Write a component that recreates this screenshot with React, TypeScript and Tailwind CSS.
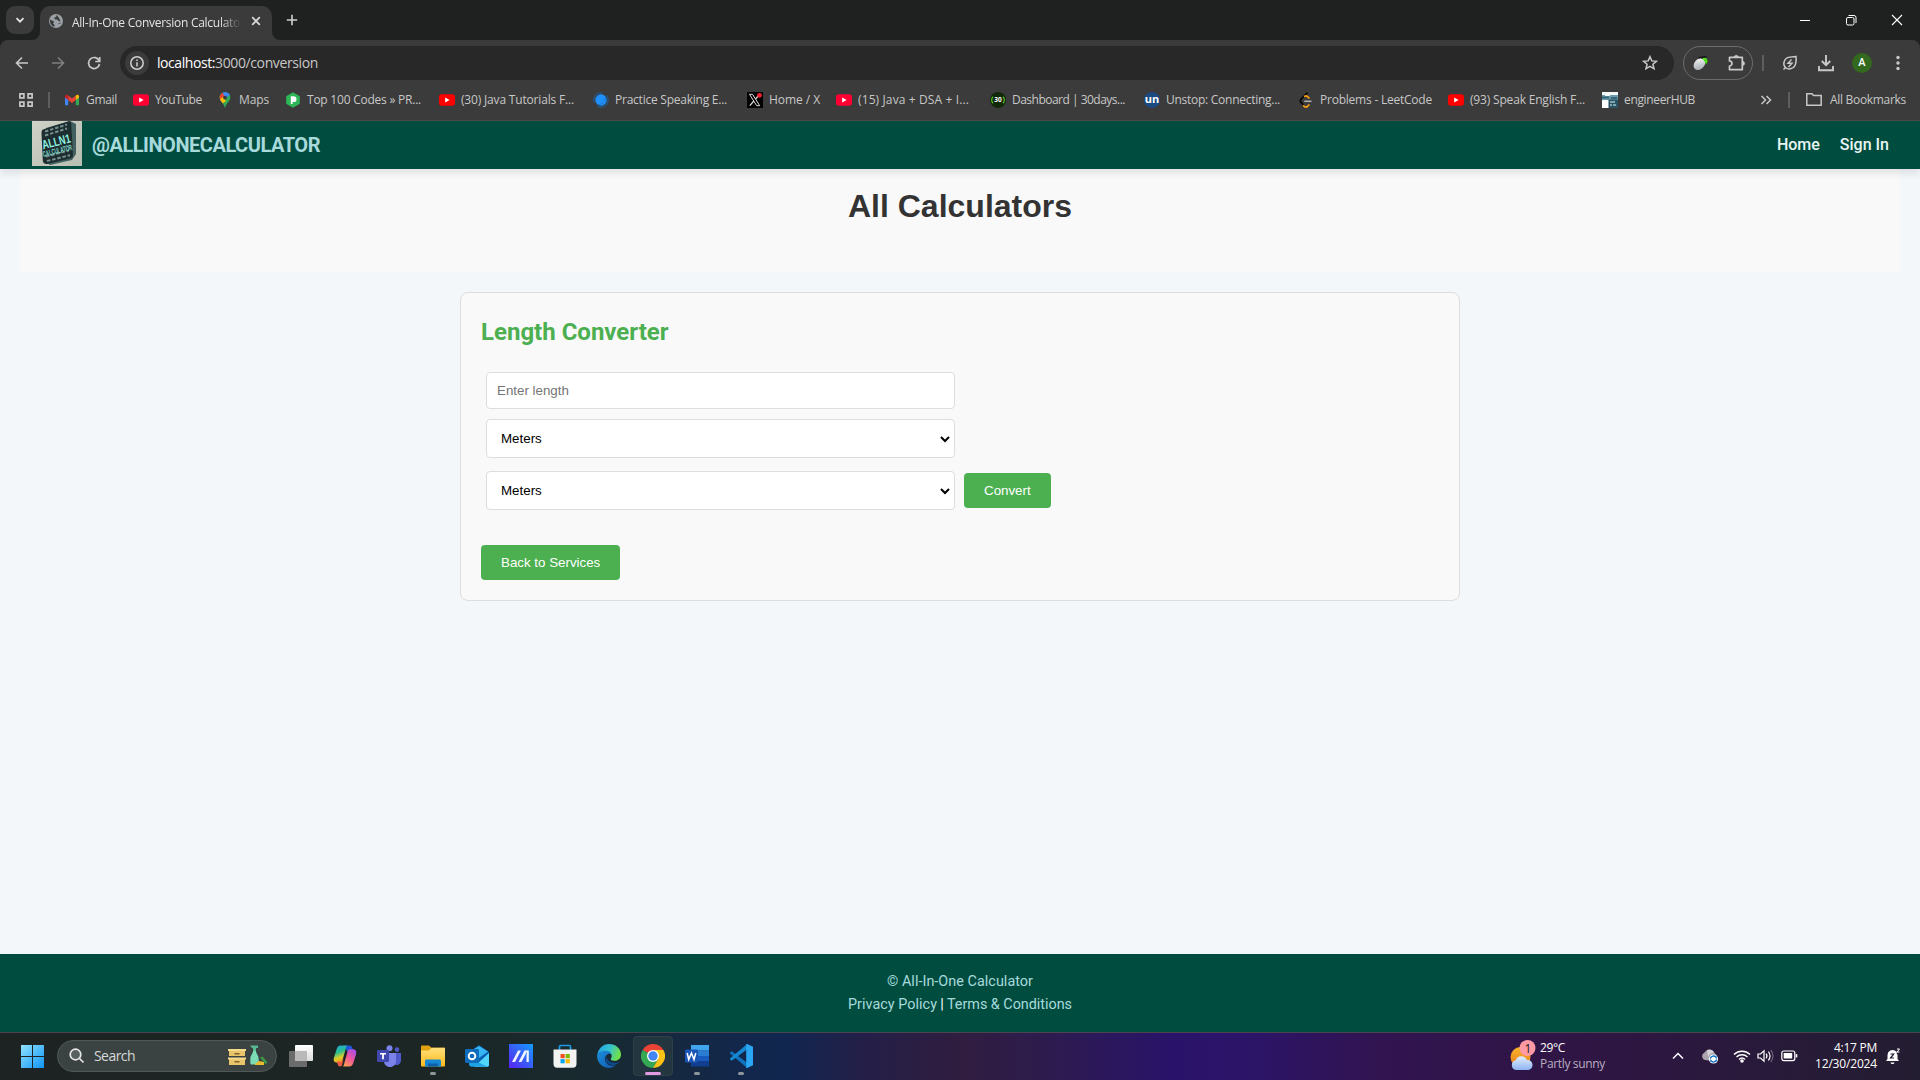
import React, { useLayoutEffect, useRef, useState } from "react";

/* Text set to an exact width by adjusting its letter spacing. */
function Fit({ w, className = "", children }: { w: number; className?: string; children: string }) {
  const ref = useRef<HTMLSpanElement>(null);
  const [gap, setGap] = useState(0);
  useLayoutEffect(() => {
    const el = ref.current;
    if (!el) return;
    el.style.letterSpacing = "0px";
    const natural = el.getBoundingClientRect().width;
    setGap((w - natural) / children.length);
    el.style.letterSpacing = (w - natural) / children.length + "px";
  }, [w, children]);
  return (
    <span ref={ref} className={"inline-block shrink-0 whitespace-pre " + className} style={{ letterSpacing: gap + "px" }}>
      {children}
    </span>
  );
}

const YouTube = ({ fill = "#ff0000" }: { fill?: string }) => (
  <svg width="16" height="16" viewBox="0 0 16 16">
    <rect x="0" y="2.2" width="16" height="11.6" rx="2.8" fill={fill} />
    <path d="M6.2 5.6v4.8L10.6 8z" fill="#fff" />
  </svg>
);

const Gmail = () => (
  <svg width="16" height="16" viewBox="0 0 16 16">
    <path d="M1 4v8.3c0 .6.4 1 1 1h2.200V7.200L1 4.800z" fill="#4285f4" />
    <path d="M15 4v8.300c0 .6-.4 1-1 1h-2.200V7.200L15 4.800z" fill="#34a853" />
    <path d="M4.200 3.500v4.500L8 10.900l3.800-2.900V3.500L8 6.400z" fill="#ea4335" />
    <path d="M1 4.300v1.300l3.200 2.400V3.500l-.9-.6C2.300 2.200 1 2.900 1 4.300z" fill="#c5221f" />
    <path d="M15 4.300v1.300L11.800 8V3.500l.9-.6c1-.7 2.300 0 2.300 1.400z" fill="#fbbc04" />
  </svg>
);

const Maps = () => (
  <svg width="16" height="16" viewBox="0 0 16 16">
    <defs>
      <clipPath id="pin">
        <path d="M8 .3C5 .3 2.600 2.600 2.600 5.600c0 2.200 1.400 3.600 2.700 5.200C6.500 12.400 7.300 14 7.500 15c.2.9.8.900 1 0 .2-1 1-2.600 2.200-4.200 1.300-1.600 2.700-3 2.700-5.200C13.400 2.600 11 .3 8 .3z" />
      </clipPath>
    </defs>
    <g clipPath="url(#pin)">
      <path d="M0 0h16v16H0z" fill="#34a853" />
      <path d="M9 0L1 9l3 3L14 1z" fill="#4285f4" />
      <path d="M0 0h6l2 5-4 4H0z" fill="#ea4335" />
      <path d="M5 0h9l2 6-4-3-4 2z" fill="#4285f4" />
      <path d="M3 7l3-2 3 4-4 3z" fill="#fbbc04" />
    </g>
    <circle cx="8" cy="5.600" r="1.900" fill="#3b3b3b" />
  </svg>
);

const Prep = () => (
  <svg width="16" height="16" viewBox="0 0 16 16">
    <path d="M8 .3l6.800 3.900v7.600L8 15.700 1.200 11.800V4.200z" fill="#2db757" />
    <path d="M5.800 12V4.300h2.800a2.900 2.900 0 010 5.800H7.600V12z" fill="#fff" />
  </svg>
);

const Swirl = () => (
  <svg width="16" height="16" viewBox="0 0 16 16" fill="none">
    <circle cx="8" cy="8" r="7.200" stroke="#1764a8" strokeWidth="1" strokeDasharray="15 5" />
    <circle cx="8" cy="8" r="5.700" fill="#1e90ff" />
    <path d="M4.500 12.500C8 13 12 10.500 12.500 5.500" stroke="#1a70c4" strokeWidth=".8" />
  </svg>
);

const XSite = () => (
  <svg width="16" height="16" viewBox="0 0 16 16">
    <path d="M0 0h16v16H0z" fill="#000" />
    <path d="M2.500 2.300h3l7.200 11.400h-3z" fill="none" stroke="#ddd" strokeWidth="1" />
    <path d="M12 2.800L8.600 7M6.800 9L2.800 13.700" stroke="#ddd" strokeWidth="1.200" />
    <circle cx="12.500" cy="3.300" r="2.400" fill="#f4212e" />
  </svg>
);

const Thirty = () => (
  <svg width="16" height="16" viewBox="0 0 16 16" fontWeight="700">
    <circle cx="8" cy="8" r="8" fill="#12280b" />
    <text x="4.200" y="10.400" fontSize="6.500" fill="#fff">30</text>
    <path d="M3 4.800a4.500 4.500 0 000 6.400M13 4.800a4.500 4.500 0 010 6.400" fill="none" stroke="#5cc22c" strokeWidth="1.200" />
  </svg>
);

const Un = () => (
  <span className="flex size-4 items-center justify-center rounded-full bg-[#1c4980] pb-0.5 text-[11px] leading-none font-bold text-white">
    un
  </span>
);

const Leet = () => (
  <svg width="16" height="16" viewBox="0 0 16 16" fill="none">
    <path d="M9.600.6L3 7.200c-.9.900-.9 2.200 0 3.100l2.400 2.600" stroke="#070707" strokeWidth="1.700" />
    <path d="M6 4.500l.7-.3c1-.6 2-.4 2.800.4l2 1.800" stroke="#ffa116" strokeWidth="1.600" />
    <path d="M5.200 13.300l1 1c1 .9 2.400.9 3.300 0l1.900-1.800" stroke="#ffa116" strokeWidth="1.700" />
    <path d="M6.300 9.300h7.200" stroke="#b3b3b3" strokeWidth="1.500" />
  </svg>
);

const EngHub = () => (
  <svg width="16" height="16" viewBox="0 0 16 16">
    <path d="M0 0h16v16H0z" fill="#f3f7f8" />
    <path d="M0 3h3v1h5V3h8v5H0z" fill="#6c9bab" />
    <path d="M0 4.500h7v2H0zM9 5h6v2H9z" fill="#34647a" />
    <path d="M6.500 7.500H16V16H6.500z" fill="#2c5364" />
    <path d="M8 9h5v2H8zM8 12h2v2H8zM11 12h3v2h-3z" fill="#7da4b0" />
    <path d="M0 9h6v7H0z" fill="#fff" />
  </svg>
);

const bookmarks: { box: string; icon: React.ReactNode; text: string; w: number }[] = [
  { box: "w-[69px]", icon: <Gmail />, text: "Gmail", w: 31 },
  { box: "w-[84px]", icon: <YouTube fill="#ff0033" />, text: "YouTube", w: 47 },
  { box: "w-[68px]", icon: <Maps />, text: "Maps", w: 30 },
  { box: "w-[154px]", icon: <Prep />, text: "Top 100 Codes » PR...", w: 114 },
  { box: "w-[154px]", icon: <YouTube />, text: "(30) Java Tutorials F...", w: 113 },
  { box: "w-[154px]", icon: <Swirl />, text: "Practice Speaking E...", w: 112 },
  { box: "w-[89px]", icon: <XSite />, text: "Home / X", w: 51 },
  { box: "w-[154px]", icon: <YouTube fill="#ff0033" />, text: "(15) Java + DSA + I...", w: 111 },
  { box: "w-[154px]", icon: <Thirty />, text: "Dashboard | 30days...", w: 113 },
  { box: "w-[154px]", icon: <Un />, text: "Unstop: Connecting...", w: 114 },
  { box: "w-[150px]", icon: <Leet />, text: "Problems - LeetCode", w: 112 },
  { box: "w-[154px]", icon: <YouTube />, text: "(93) Speak English F...", w: 115 },
  { box: "w-[100px]", icon: <EngHub />, text: "engineerHUB", w: 71 },
];

function TabStrip() {
  return (
    <div className="flex h-10 items-end bg-[#1f2120]">
      <div className="mb-1.5 ml-1.5 flex size-7 items-center justify-center rounded-[9px] bg-[#3b3b3b]">
        <svg width="12" height="12" viewBox="0 0 12 12" fill="none" stroke="#e3e3e3" strokeWidth="1.800">
          <path d="M2.500 4.200L6 7.700l3.500-3.500" />
        </svg>
      </div>
      <div className="-ml-[2px] flex h-[34px] items-end">
        <svg width="8" height="8" viewBox="0 0 8 8">
          <path d="M0 8h8V0a8 8 0 01-8 8z" fill="#3b3b3b" />
        </svg>
        <div className="flex h-[34px] w-[232px] items-center rounded-t-[10px] bg-[#3b3b3b] pb-[5px]">
          <svg width="16" height="16" viewBox="0 0 16 16" className="ml-2 shrink-0">
            <circle cx="8" cy="8" r="7" fill="#9aa0a6" />
            <path
              d="M2 6.500l3.500 1.700c.5.300.7 1 .3 1.400L5 10.500l1.500 1.200v2.100C4 13.500 2.300 11 2 9zM9 1.700L8.200 3.800 6.500 4.600v1.700l2.600.2 1.500 1.600 2.200.2.900 1.700M10 11.300l1.300-1.500 1.900.300"
              fill="#3b3b3b"
            />
          </svg>
          <div className="ml-2 w-[169px] [mask-image:linear-gradient(to_right,#000_88%,transparent_100%)]">
            <Fit w={168} className="text-[12px] leading-4 text-[#e3e3e3]">All-In-One Conversion Calculato</Fit>
          </div>
          <svg width="10" height="10" viewBox="0 0 10 10" className="ml-[10px]" stroke="#dcdcdc" strokeWidth="1.700">
            <path d="M1.200 1.200l7.600 7.600M8.800 1.200L1.200 8.800" />
          </svg>
        </div>
        <svg width="8" height="8" viewBox="0 0 8 8">
          <path d="M0 0v8h8a8 8 0 01-8-8z" fill="#3b3b3b" />
        </svg>
      </div>
      <svg width="12" height="12" viewBox="0 0 12 12" className="mb-3.5 ml-[6px]" stroke="#d0d0d0" strokeWidth="1.600">
        <path d="M6 .8v10.400M.8 6h10.400" />
      </svg>
      <div className="mb-3.5 ml-auto flex items-center pr-[17px]">
        <svg width="12" height="12" viewBox="0 0 12 12" stroke="#fff" strokeWidth="1" className="mr-[34px]">
          <path d="M1 6.500h10" />
        </svg>
        <svg width="12" height="12" viewBox="0 0 12 12" fill="none" stroke="#fff" strokeWidth="1" className="mr-[34px]">
          <rect x="1.500" y="3.500" width="7.500" height="7.500" rx="1.500" />
          <path d="M3.500 1.500H9a2 2 0 012 2V9" />
        </svg>
        <svg width="12" height="12" viewBox="0 0 12 12" stroke="#fff" strokeWidth="1.100">
          <path d="M1 1l10 10M11 1L1 11" />
        </svg>
      </div>
    </div>
  );
}

function Toolbar() {
  return (
    <div className="bg-[#1f2120]">
      <div className="flex h-[46px] items-center rounded-t-[8px] bg-[#3b3b3b]">
        <svg width="14" height="14" viewBox="0 0 14 14" fill="none" stroke="#c9c9c9" strokeWidth="1.600" className="ml-[15px]">
          <path d="M13 7H2M7 1.500L1.500 7 7 12.500" />
        </svg>
        <svg width="14" height="14" viewBox="0 0 14 14" fill="none" stroke="#808080" strokeWidth="1.600" className="ml-[22px]">
          <path d="M1 7h11M7 1.500L12.500 7 7 12.500" />
        </svg>
        <svg width="14" height="14" viewBox="0 0 14 14" fill="none" stroke="#c9c9c9" strokeWidth="1.700" className="ml-[22px]">
          <path d="M12.200 5A5.500 5.500 0 1012.500 8M12.700 1v4.500H8.200" />
        </svg>
        <div className="ml-[19px] flex h-[34px] w-[1554px] items-center rounded-full bg-[#282828] pr-4 pl-[5px]">
          <div className="flex size-6 items-center justify-center rounded-full bg-[#3b3b3b]">
            <svg width="14" height="14" viewBox="0 0 14 14" fill="none" stroke="#d0d0d0" strokeWidth="1.500">
              <circle cx="7" cy="7" r="6.200" />
              <path d="M7 6.200v4.200M7 3.500v1.500" />
            </svg>
          </div>
          <div className="ml-2 flex text-[14px] leading-5">
            <Fit w={58} className="text-white">localhost:</Fit>
            <Fit w={103} className="text-[#c7c7c7]">3000/conversion</Fit>
          </div>
          <svg width="16" height="16" viewBox="0 0 16 16" fill="none" stroke="#c9c9c9" strokeWidth="1.500" className="ml-auto">
            <path d="M8 1.700l1.800 4.200 4.600.4-3.500 3 1.100 4.500L8 11.400l-4 2.400 1.100-4.500-3.500-3 4.600-.4z" />
          </svg>
        </div>
        <div className="ml-[9px] flex h-[34px] w-[70px] items-center justify-between rounded-full border border-[#6c6c6c] pr-[6px] pl-2">
          <svg width="17" height="17" viewBox="0 0 17 17">
            <defs>
              <linearGradient id="mouse" x2="1" y2="1"><stop stopColor="#fff" /><stop offset="1" stopColor="#98a1a8" /></linearGradient>
            </defs>
            <ellipse cx="7.500" cy="9" rx="5" ry="6.800" transform="rotate(42 7.500 9)" fill="url(#mouse)" />
            <path d="M10 3.200c2-1 4-.6 5 .8s.7 3.500-1.200 5.500c-.4-2.500-1.800-4.500-3.800-6.300z" fill="#4fe015" />
            <path d="M6.500 3.200c1.500-1 3-.7 4 .3M9.500 2.200l5-.5" stroke="#111" strokeWidth="1.300" fill="none" />
          </svg>
          <svg width="18" height="18" viewBox="0 0 18 18" fill="none" stroke="#c9c9c9" strokeWidth="1.700">
            <path d="M1.500 3.300H14.300V15.700H1.500V12a2.500 2.500 0 000-5z" strokeLinejoin="round" />
            <path d="M6 3a2.300 2.300 0 014.500 0zM14.500 7.300a2.100 2.100 0 010 4.300z" fill="#c9c9c9" strokeWidth=".5" />
          </svg>
        </div>
        <div className="ml-[9px] h-4 w-0.5 bg-[#5e5e5e]" />
        <svg width="16" height="16" viewBox="0 0 16 16" fill="none" stroke="#c9c9c9" strokeWidth="1.500" className="ml-[18px]">
          <path d="M1.500 14.500l2-2C.5 9.500 1.800 4.500 5.500 2.700 8 1.500 11.500 1.800 14 1.500c.3 3.500.5 6.500-1.200 9.300-2 3.400-6.300 4-9.300 1.700" />
          <path d="M9.500 4.500L6 8.300h4L6.500 12" strokeWidth="1.400" />
        </svg>
        <svg width="18" height="18" viewBox="0 0 18 18" fill="none" stroke="#c9c9c9" strokeWidth="1.900" className="ml-[19px]">
          <path d="M9 1v9.800M4.800 7L9 11.200 13.200 7M2 12v4.200h14V12" />
        </svg>
        <div className="ml-[17px] flex size-5 items-center justify-center rounded-full bg-[#33691e] font-['Roboto'] text-[11px] font-medium text-white">
          A
        </div>
        <svg width="4" height="16" viewBox="0 0 4 16" fill="#c9c9c9" className="ml-6">
          <circle cx="2" cy="2.500" r="1.700" />
          <circle cx="2" cy="8" r="1.700" />
          <circle cx="2" cy="13.500" r="1.700" />
        </svg>
      </div>
    </div>
  );
}

function BookmarksBar() {
  return (
    <div className="flex h-[35px] items-center border-b border-[#4a4a4a] bg-[#3b3b3b] pb-[7px] text-[12px] text-[#c7c7c7]">
      <svg width="14" height="14" viewBox="0 0 14 14" fill="none" stroke="#c7c7c7" strokeWidth="1.700" className="ml-[19px]">
        <path d="M.9.900h4v4h-4zM9.100.900h4v4h-4zM.9 9.100h4v4h-4zM9.100 9.100h4v4h-4z" />
      </svg>
      <div className="mr-[14px] ml-[15px] h-4 w-0.5 bg-[#5e5e5e]" />
      {bookmarks.map((b) => (
        <div key={b.text} className={"flex shrink-0 items-center gap-[6px] " + b.box}>
          <span className="size-4 shrink-0">{b.icon}</span>
          <Fit w={b.w} className="leading-4">{b.text}</Fit>
        </div>
      ))}
      <svg width="12" height="10" viewBox="0 0 12 10" fill="none" stroke="#c7c7c7" strokeWidth="1.500" className="ml-auto">
        <path d="M1.500 1l4 4-4 4M6.500 1l4 4-4 4" />
      </svg>
      <div className="ml-[16px] h-4 w-0.5 bg-[#5e5e5e]" />
      <svg width="16" height="13" viewBox="0 0 16 13" fill="none" stroke="#c7c7c7" strokeWidth="1.500" className="ml-[16px]">
        <path d="M.8 12.200V.8h5.200l1.500 1.700h7.700v9.700z" />
      </svg>
      <Fit w={76} className="mr-[14px] ml-2 leading-4">All Bookmarks</Fit>
    </div>
  );
}

function Logo() {
  return (
    <svg width="50" height="45" viewBox="0 0 50 45">
      <defs>
        <linearGradient id="lg" x1="0" y1="0" x2="1" y2="1">
          <stop offset="0" stopColor="#cfd2c6" />
          <stop offset="1" stopColor="#b9beb2" />
        </linearGradient>
      </defs>
      <path d="M0 0h50v45H0z" fill="url(#lg)" />
      <path d="M14 7L38 0l6 3v30l-4 6-22 5-7-5z" fill="#41605f" />
      <path d="M11 8.500L36 .5c2-.5 3 .5 3.200 2L41 34c0 2-1 3-3 3.500L15 43c-2 .4-4-1-4.200-3L9.500 12c0-2 .5-3 1.500-3.500z" fill="#1d2d30" />
      <g stroke="#78918e" strokeWidth="2" strokeDasharray="3.500 1.800" fill="none">
        <path d="M13 10.500l22-7M13 14.500l22-7M14 35.500l23-6M15 40l23-5.800" />
      </g>
      <g transform="rotate(-14 24 22)" className="font-['Liberation_Sans'] font-bold">
        <text x="10" y="25" fontSize="12.500" fill="#8ff5e2" textLength="29" lengthAdjust="spacingAndGlyphs">ALLN1</text>
        <text x="8.500" y="32.500" fontSize="8" fill="#7fd8ca" textLength="30" lengthAdjust="spacingAndGlyphs">CALCULATOR</text>
      </g>
    </svg>
  );
}

function Select() {
  return (
    <div className="flex h-[39px] w-[469px] items-center justify-between rounded border border-[#ddd] bg-white pr-[3px] pl-[14px] font-['Liberation_Sans'] text-[13.333px] text-black">
      <span>Meters</span>
      <svg width="12" height="12" viewBox="0 0 12 12" fill="none" stroke="#000" strokeWidth="2">
        <path d="M2 4l4 4 4-4" />
      </svg>
    </div>
  );
}

function Page() {
  return (
    <div className="flex min-h-0 flex-1 flex-col bg-[#f3f7fa] font-['Roboto']">
      <header className="z-10 flex h-12 shrink-0 items-center bg-[#004d40] pr-[31px] pl-8 shadow-[0_4px_8px_rgba(0,0,0,0.1)]">
        <div className="h-12">
          <Logo />
        </div>
        <Fit w={228} className="ml-[10px] text-[20px] leading-6 font-bold text-[#a8dadc]">@ALLINONECALCULATOR</Fit>
        <nav className="ml-auto flex gap-5 text-[16px] font-medium text-[#e8f5f3]">
          <a>Home</a>
          <a>Sign In</a>
        </nav>
      </header>
      <section className="mx-5 flex h-[103px] shrink-0 justify-center bg-[#f9f9f9] pt-[19px]">
        <h1 className="font-['Liberation_Sans'] text-[32px] leading-9 font-bold text-[#333]">All Calculators</h1>
      </section>
      <section className="mx-auto mt-5 flex h-[309px] w-[1000px] shrink-0 flex-col items-start rounded-lg border border-[#ddd] bg-[#f9f9f9] px-5">
        <h2 className="mt-[25px] text-[24px] leading-7 font-bold text-[#4caf50]">Length Converter</h2>
        <div className="mt-[26px] ml-[5px] flex h-[37px] w-[469px] items-center rounded border border-[#ddd] bg-white pl-[10px] font-['Liberation_Sans'] text-[13.333px] text-[#757575]">
          Enter length
        </div>
        <div className="mt-[10px] ml-[5px]">
          <Select />
        </div>
        <div className="mt-[13px] ml-[5px] flex items-center gap-[9px]">
          <Select />
          <button className="h-[35px] rounded bg-[#4caf50] px-5 font-['Liberation_Sans'] text-[13.333px] text-white">Convert</button>
        </div>
        <button className="mt-[35px] h-[35px] rounded bg-[#4caf50] px-5 font-['Liberation_Sans'] text-[13.333px] text-white">
          Back to Services
        </button>
      </section>
      <footer className="mt-auto flex h-[78px] shrink-0 flex-col items-center bg-[#004d40] pt-4 text-[14.4px] leading-[23px] text-[#a8dadc]">
        <Fit w={146}>© All-In-One Calculator</Fit>
        <div className="flex">
          <Fit w={89}>Privacy Policy</Fit>
          <span className="w-[10px] text-center text-white">|</span>
          <Fit w={125}>Terms &amp; Conditions</Fit>
        </div>
      </footer>
    </div>
  );
}

const I = ({ children }: { children: React.ReactNode }) => (
  <svg width="24" height="24" viewBox="0 0 24 24">{children}</svg>
);

const apps: { key: string; mark?: "dot" | "active"; icon: React.ReactNode }[] = [
  {
    key: "taskview",
    icon: (
      <I>
        <defs>
          <linearGradient id="tv" x2="0" y2="1"><stop stopColor="#fff" /><stop offset="1" stopColor="#dcdcdc" /></linearGradient>
        </defs>
        <rect x="6" y="1" width="18" height="16" rx=".8" fill="url(#tv)" />
        <rect x="0" y="7" width="18" height="16" rx=".8" fill="#6b6b6b" />
        <path d="M6 7h12v10H6z" fill="#b9b9b9" />
      </I>
    ),
  },
  {
    key: "copilot",
    icon: (
      <I>
        <defs>
          <linearGradient id="c1" x2=".3" y2="1"><stop stopColor="#1aa7e8" /><stop offset=".45" stopColor="#2bbf8f" /><stop offset=".75" stopColor="#d8cf2a" /><stop offset="1" stopColor="#f6a01e" /></linearGradient>
          <linearGradient id="c2" x1=".8" x2=".2" y2="1"><stop stopColor="#a84de8" /><stop offset=".5" stopColor="#f0569a" /><stop offset="1" stopColor="#ffa04f" /></linearGradient>
        </defs>
        <path d="M11 1.500h5.500c1.600 0 2.400.8 2.800 2.200L20 6.500h-3.200c-1.200 0-2 .7-2.300 1.800z" fill="#1f55d8" />
        <path d="M14.500 1.500H7.800C5.500 1.500 4.300 3 3.600 5.200L1 13.500c-1 3.300.4 5.200 3.300 5.200h2.500c1.500 0 2.200-.8 2.600-2.200l3.300-11.700c.4-1.500.8-3.300 1.800-3.300z" fill="url(#c1)" />
        <path d="M9.500 22.500h6.700c2.300 0 3.500-1.500 4.200-3.700L23 10.500c1-3.300-.4-5.200-3.300-5.200h-2.500c-1.500 0-2.200.8-2.600 2.200l-3.300 11.700c-.4 1.500-.8 3.300-1.800 3.300z" fill="url(#c2)" />
        <path d="M4 17.500h4.800l1.700-3-1.200 6c-.3 1.300-1 2-2.200 2-1.500 0-2.500-1.300-3.100-5z" fill="#ee5a45" />
      </I>
    ),
  },
  {
    key: "teams",
    icon: (
      <I>
        <circle cx="12.500" cy="4.300" r="3" fill="#7b83eb" />
        <circle cx="20" cy="5.600" r="2.300" fill="#5059c9" />
        <path d="M16 9h8v7c0 3-2 5-4.500 5S16 19 16 16z" fill="#5059c9" />
        <path d="M7 9h12v8c0 3.500-2.500 6-6 6s-6-2.500-6-6z" fill="#7b83eb" />
        <rect x="0" y="6" width="12" height="12" rx="1" fill="#4048b0" />
        <path d="M3 9h6v1.600H6.900V15.300H5.100v-4.700H3z" fill="#fff" />
      </I>
    ),
  },
  {
    key: "explorer",
    mark: "dot",
    icon: (
      <I>
        <defs>
          <linearGradient id="fx" x2="0" y2="1"><stop stopColor="#ffe07a" /><stop offset="1" stopColor="#fbb91c" /></linearGradient>
        </defs>
        <path d="M0 2.500c0-.6.400-1 1-1h7l2.500 2.300H24V8H0z" fill="#e2a10f" />
        <path d="M0 6.500h8l2.500-2.700H23c.6 0 1 .4 1 1v16.700c0 .6-.4 1-1 1H1c-.6 0-1-.4-1-1z" fill="url(#fx)" />
        <path d="M4 22.500V17c0-.9.600-1.500 1.500-1.500h13c.9 0 1.500.6 1.500 1.500v5.500z" fill="#1687d3" />
        <path d="M7 19.500h10v3H7z" fill="#0c5fa5" />
      </I>
    ),
  },
  {
    key: "outlook",
    icon: (
      <I>
        <path d="M4 8L14 1l10 7v13c0 1-.7 1.800-1.800 1.800H7C5.500 22.800 4 22 4 20z" fill="#0a5fb4" />
        <path d="M6 7l8-5 9 5.500-9 6.500z" fill="#38b5f3" />
        <path d="M24 9v12c0 1-.7 1.800-1.800 1.800H9z" fill="#52d5fb" />
        <path d="M4 14l18 8.500H7C5.200 22.500 4 21.500 4 20z" fill="#1da2e6" />
        <rect x="0" y="5" width="14" height="14" rx="1.200" fill="#0f6cbd" />
        <circle cx="7" cy="12" r="3.300" fill="none" stroke="#fff" strokeWidth="1.900" />
      </I>
    ),
  },
  {
    key: "myasus",
    icon: (
      <I>
        <defs>
          <linearGradient id="ma" x1="0" y1="1" x2="1" y2="0"><stop stopColor="#5a22f0" /><stop offset="1" stopColor="#149bff" /></linearGradient>
        </defs>
        <path d="M0 0h24v24H0z" fill="url(#ma)" />
        <path d="M3 18L9 6.500h3L6 18zM9.500 18l6-11.500h3L12.500 18z" fill="#fff" opacity=".93" />
        <path d="M18 6.500h1.800V18h-2.300v-6z" fill="#fff" opacity=".93" />
      </I>
    ),
  },
  {
    key: "store",
    icon: (
      <I>
        <path d="M6.500 6V2.500c0-.6.400-1 1-1h9c.6 0 1 .4 1 1V6" fill="none" stroke="#1d9ce6" strokeWidth="1.700" />
        <path d="M.5 5.500h23V20c0 2.200-1.300 3.700-3.700 3.700H4.200C1.800 23.700.5 22.200.5 20z" fill="#f2f2f2" />
        <path d="M7.500 10h4.200v4.200H7.500z" fill="#f25022" />
        <path d="M12.600 10h4.200v4.200h-4.200z" fill="#7fba00" />
        <path d="M7.500 15.100h4.200v4.200H7.500z" fill="#00a4ef" />
        <path d="M12.600 15.100h4.200v4.200h-4.200z" fill="#ffb900" />
      </I>
    ),
  },
  {
    key: "edge",
    icon: (
      <I>
        <defs>
          <linearGradient id="e1" x2="1" y2=".3"><stop stopColor="#1f9fe6" /><stop offset=".55" stopColor="#35c1d0" /><stop offset="1" stopColor="#6ee04e" /></linearGradient>
          <linearGradient id="e2" x2="1" y2="1"><stop stopColor="#1b8fdd" /><stop offset="1" stopColor="#1156a8" /></linearGradient>
        </defs>
        <path d="M.3 11C1.200 4.500 6 0 12 0c7 0 12 5 12 10.500 0 4-3 6.300-6.500 6.300-2.500 0-3.800-1-3.800-1.900 0-.7 1-1.200 1-3C14.700 9.500 12 7.500 8.500 7.500 4.500 7.500 1.200 9 .3 11z" fill="url(#e1)" />
        <path d="M.1 12C.1 8.500 4 6.800 8.500 6.800c3.500 0 5.500 1.700 6.100 3.700-1-.8-2.200-1-3.300-.6-3 1.200-4 4.500-2.700 7.500 1.600 3.700 5.600 5 9.900 3.900C16.700 23 14.500 24 12 24 5.400 24 .1 18.600.1 12z" fill="url(#e2)" />
        <path d="M9 12c-1.600 5.500 2.500 9.500 8 9 2.300-.200 4-1.300 5.200-3-5 2.200-12 .7-13.200-6z" fill="#0d4a94" />
      </I>
    ),
  },
  {
    key: "chrome",
    mark: "active",
    icon: (
      <I>
        <path d="M12 12L1.600 6A12 12 0 0122.400 6z" fill="#ea4335" />
        <path d="M12 12L1.600 6A12 12 0 0012 24l5.200-9z" fill="#34a853" />
        <path d="M12 6h10.400A12 12 0 0112 24l5.200-9z" fill="#fbc116" />
        <circle cx="12" cy="12" r="6" fill="#fff" />
        <circle cx="12" cy="12" r="4.700" fill="#4285f4" />
      </I>
    ),
  },
  {
    key: "word",
    mark: "dot",
    icon: (
      <I>
        <path d="M6 1h18v5.600H6z" fill="#41a5ee" />
        <path d="M6 6.500h18v5.500H6z" fill="#2b7cd3" />
        <path d="M6 12h18v5.500H6z" fill="#185abd" />
        <path d="M6 17.500h18v5H6z" fill="#103f91" />
        <rect x="0" y="5.500" width="13" height="13" rx="1" fill="#1a55b5" />
        <path d="M2.200 9l1.500 6.500L6.500 9l2.500 6.500L10.800 9" fill="none" stroke="#fff" strokeWidth="1.500" />
      </I>
    ),
  },
  {
    key: "vscode",
    mark: "dot",
    icon: (
      <I>
        <path d="M1 8.500l1.700-1.300 15.500 11.600V24L1 9.500z" fill="#0e73bd" />
        <path d="M1 15.500l1.700 1.300L18.200 5.200V0L1 14.500z" fill="#1688d2" />
        <path d="M18.200 0L24 2.700v18.600L18.200 24c-.6.200-1 0-1-.5V.5c0-.5.400-.7 1-.5z" fill="#2aa6f2" />
      </I>
    ),
  },
];

function Taskbar() {
  return (
    <div className="flex h-12 shrink-0 items-center border-t border-[#4a4450] bg-[linear-gradient(90deg,#1d2322_0%,#1c2624_22%,#182a30_31%,#13274a_38%,#11264f_41%,#241f48_45%,#301d3f_50%,#2d1b50_55%,#29136a_61%,#2c1468_65%,#311450_72%,#2f1544_82%,#281a3a_92%,#231d31_100%)] pb-[1px] font-['Open_Sans']">
      <svg width="24" height="24" viewBox="0 0 24 24" className="ml-[20px]">
        <defs>
          <linearGradient id="win" x2="1" y2="1"><stop stopColor="#8fe3ff" /><stop offset="1" stopColor="#0f94f5" /></linearGradient>
        </defs>
        <path d="M1 1h11v11H1zM13 1h11v11H13zM1 13h11v11H1zM13 13h11v11H13z" fill="url(#win)" />
      </svg>
      <div className="ml-[13px] flex h-8 w-[220px] items-center rounded-full border border-[#525857] bg-[#3b4342] pr-2 pl-[11px]">
        <svg width="16" height="16" viewBox="0 0 16 16" fill="none" stroke="#e6e6e6" strokeWidth="1.700">
          <circle cx="6.500" cy="6.500" r="5.300" fill="#596060" />
          <path d="M10.500 10.500l4 4" />
        </svg>
        <Fit w={41} className="ml-[9px] text-[14px] leading-5 text-[#d6d8d8]">Search</Fit>
        <svg width="42" height="22" viewBox="0 0 42 22" className="ml-auto">
          <path d="M3 4h16v7H3zM3 13h16v7H3z" fill="#e9c46a" />
          <path d="M2 4h18v2H2zM2 12.500h18v2H2z" fill="#f6da8c" />
          <path d="M8.500 8h5v1.500h-5zM8.500 16h5v1.500h-5z" fill="#80622a" />
          <path d="M24 .5h8v2.500h-6zM27 3h3v4h-3z" fill="#58b892" />
          <path d="M27 6h3c0 3 2.700 4 2.700 8v4c0 1-.7 1.500-1.700 1.500h-5c-1 0-1.700-.5-1.700-1.500v-4c0-4 2.700-5 2.700-8z" fill="#7bdcb5" />
          <path d="M29 19l4-3 5 1v3h-9z" fill="#e6bd2e" />
          <path d="M34 12.500l2.500-1 5 6-2 1.500z" fill="#3d9a4b" />
        </svg>
      </div>
      <div className="ml-[2px] flex">
        {apps.map((a) => (
          <div key={a.key} className="flex w-11 justify-center">
            <div
              className={
                a.mark === "active"
                  ? "relative flex size-10 items-center justify-center rounded border border-[#2f4147] bg-[#233640]"
                  : "relative flex size-10 items-center justify-center"
              }
            >
              {a.icon}
              {a.mark === "dot" && <i className="absolute bottom-[1px] h-[3px] w-[6px] rounded-full bg-[#8f979a]" />}
              {a.mark === "active" && <i className="absolute bottom-0 h-[3px] w-4 rounded-full bg-[#e09be0]" />}
            </div>
          </div>
        ))}
      </div>
      <div className="ml-auto flex items-center">
        <svg width="28" height="32" viewBox="0 0 28 32" className="mb-[3px]">
          <defs>
            <linearGradient id="sun" x2="0" y2="1"><stop stopColor="#f7b52a" /><stop offset="1" stopColor="#ec7d1c" /></linearGradient>
            <linearGradient id="cl" x2="0" y2="1"><stop stopColor="#e4efff" /><stop offset="1" stopColor="#8db4f2" /></linearGradient>
          </defs>
          <circle cx="11.500" cy="18" r="10" fill="url(#sun)" />
          <path d="M7 31a5 5 0 01-.3-9.800 6 6 0 0111.200-.3A5 5 0 0119 31z" fill="url(#cl)" />
          <circle cx="18.500" cy="9" r="8" fill="#ff99a4" />
          <text x="15.500" y="13.500" fontSize="12" fill="#1a1a1a" className="font-['Open_Sans']">1</text>
        </svg>
        <div className="ml-[3px] flex w-[67px] flex-col text-[12px] leading-4 text-white">
          <Fit w={25} className="self-start">29°C</Fit>
          <Fit w={65} className="self-start text-[#b9aec0]">Partly sunny</Fit>
        </div>
        <svg width="12" height="8" viewBox="0 0 12 8" fill="none" stroke="#fff" strokeWidth="1.500" className="ml-[65px]">
          <path d="M1 6.500l5-5 5 5" />
        </svg>
        <svg width="18" height="16" viewBox="0 0 18 16" className="ml-[17px]">
          <path d="M4 12a4 4 0 01-.5-7.500A5.500 5.500 0 0113 4.300L16 8 8 12.500z" fill="#aaa4ae" />
          <path d="M6 2a5 5 0 017 2.500c-3 0-4.500 2-6 4z" fill="#d6d3d8" />
          <circle cx="12.500" cy="11" r="4.600" fill="#fff" />
          <path d="M9.300 10.500a3.300 3.300 0 015.700-1.300v-1M15.700 11.500a3.300 3.300 0 01-5.700 1.300v1" fill="none" stroke="#1270c8" strokeWidth="1.500" />
        </svg>
        <svg width="18" height="14" viewBox="0 0 18 14" fill="none" stroke="#fff" strokeWidth="1.400" className="ml-[14px]">
          <path d="M1 5.500a11.500 11.500 0 0116 0M3.500 8a8 8 0 0111 0M6 10.400a4.500 4.500 0 016 0" />
          <circle cx="9" cy="12" r="1.100" fill="#fff" />
        </svg>
        <svg width="18" height="14" viewBox="0 0 18 14" fill="none" stroke="#fff" strokeWidth="1.200" className="ml-[6px]">
          <path d="M1 5h2.500L7 1.800v10.400L3.500 9H1z" />
          <path d="M9 4.700a3.500 3.500 0 010 4.600M11.300 2.700a6.200 6.200 0 010 8.600" />
          <path d="M13.700 1a9 9 0 010 12" stroke="#6d6176" />
        </svg>
        <svg width="17" height="12" viewBox="0 0 17 12" fill="none" stroke="#fff" strokeWidth="1.200" className="ml-[6px]">
          <rect x=".8" y="1" width="13" height="9.600" rx="2" />
          <rect x="2.700" y="3" width="8.500" height="5.600" rx=".6" fill="#fff" stroke="none" />
          <path d="M15.500 4.200v3.200" strokeWidth="1.600" />
        </svg>
        <div className="ml-[16px] flex w-[63px] flex-col items-end text-[12px] leading-4 text-white">
          <Fit w={43}>4:17 PM</Fit>
          <Fit w={62}>12/30/2024</Fit>
        </div>
        <svg width="16" height="17" viewBox="0 0 16 17" className="mr-[19px] ml-[8px]">
          <path d="M2.500 11V7a5 5 0 018-4l2 4v4l1.500 2H1zM5.500 14.500h4c-.3 1-1 1.600-2 1.600s-1.700-.6-2-1.600z" fill="#fff" />
          <path d="M5.500 6h3.300l-3.300 4h3.500" fill="none" stroke="#271b36" strokeWidth="1.200" />
          <path d="M9.500 4h2L9.500 7h2.200M12 1h2.500L12 4h2.500" fill="none" stroke="#fff" strokeWidth="1" />
        </svg>
      </div>
    </div>
  );
}

export default function App() {
  return (
    <div className="flex h-[1080px] w-[1920px] flex-col overflow-hidden font-['Open_Sans',sans-serif]">
      <TabStrip />
      <Toolbar />
      <BookmarksBar />
      <Page />
      <Taskbar />
    </div>
  );
}
